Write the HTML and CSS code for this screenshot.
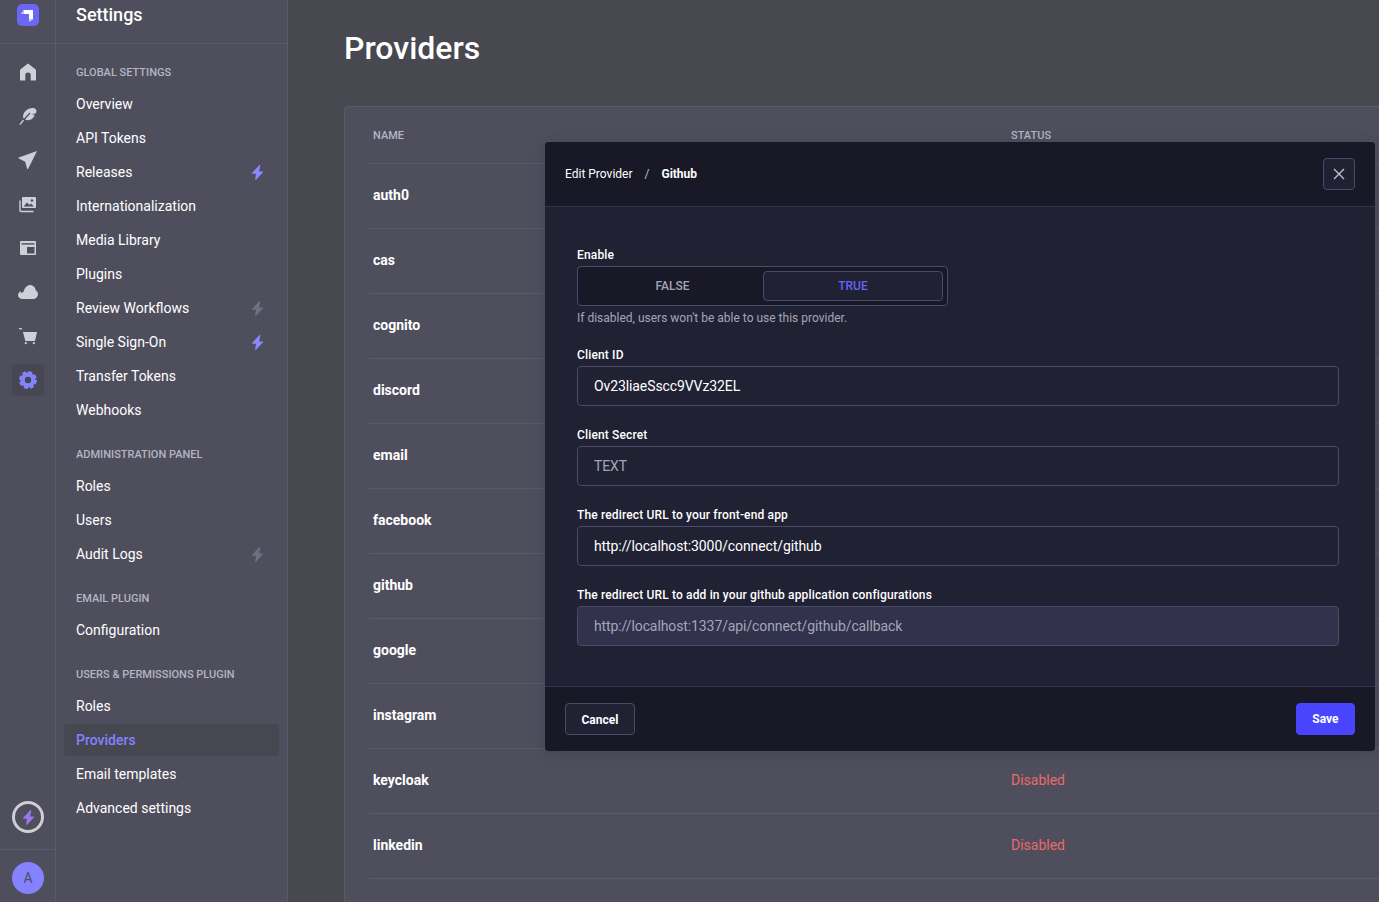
FILE: index.html
```html
<!DOCTYPE html>
<html lang="en">
<head>
    <meta charset="UTF-8">
    <title>Providers</title>
    <link rel="stylesheet" href="styles.css">
</head>
<body>
    <svg class="sprites" width="0" height="0">
        <symbol id="bolt" viewBox="1 0 10 16" preserveAspectRatio="none">
            <path d="M7.6.3 1 8.400c-.3.4-.1.9.4.9h3.200L3.900 15.300c-.1.5.5.8.8.4l6.300-7.900c.3-.4.1-.9-.4-.9H7.500L8.500.7C8.600.2 8-.1 7.600.3Z"/>
        </symbol>
    </svg>

    <div class="app">
        <nav class="rail">
            <div class="rail-logo">
                <svg width="22" height="22" viewBox="0 0 22 22">
                    <rect width="22" height="22" rx="5" fill="#6a67f5"/>
                    <path d="M6.500 6H16v9.500h-4V10H6.500Z" fill="#fff"/>
                    <path d="M6.500 6v4H4Z M12 15.500h4L12 18Z" fill="#c9c8fb"/>
                </svg>
            </div>
            <ul class="rail-list">
                <li class="rail-item">
                    <svg width="18" height="18" viewBox="0 0 18 18"><path d="M9 .6 1.600 6.200A1.500 1.500 0 0 0 1 7.400v9c0 .6.4 1 1 1h4.300V12.300a2.700 2.700 0 0 1 5.400 0v5.100H16c.6 0 1-.4 1-1v-9a1.500 1.500 0 0 0-.6-1.200Z"/></svg>
                </li>
                <li class="rail-item">
                    <svg width="18" height="18" viewBox="0 0 18 18"><path d="M4 10.500C3.800 5 8.700 1 13.500 1c3 0 4.500 1.700 3.800 4.200-.3 1.100-1.200 1.500-2.400 1.600l-2.200.2 2.900 1c-.8 2.800-3.300 5.200-6.600 5.200-1.100 0-2-.3-2.800-.8Z"/><path d="M.8 17.600 4.600 13" fill="none" stroke="#cfcfd8" stroke-width="1.300"/><path d="M4.600 13 11 6" fill="none" stroke="#4f4e5d" stroke-width="1.200"/></svg>
                </li>
                <li class="rail-item">
                    <svg width="20" height="20" viewBox="0 0 20 20"><path d="M19 1 .8 7.600c-.5.200-.5.800 0 1l6.400 3.200 1.900 6.900c.2.600.9.600 1.100.1Z"/></svg>
                </li>
                <li class="rail-item">
                    <svg width="18" height="18" viewBox="0 0 18 18"><path d="M4 2h12a1 1 0 0 1 1 1v9a1 1 0 0 1-1 1H4a1 1 0 0 1-1-1V3a1 1 0 0 1 1-1Z"/><path d="M1 5.500v10a1 1 0 0 0 1 1h12.500" fill="none" stroke="#cfcfd8" stroke-width="1.400"/><path d="m4.500 11.500 3.500-4 2.500 2.500 1.500-1.500 3 3Z" fill="#4f4e5d"/><circle cx="13" cy="5.500" r="1.300" fill="#4f4e5d"/></svg>
                </li>
                <li class="rail-item">
                    <svg width="16" height="14" viewBox="0 0 16 14"><rect width="16" height="14" rx="1"/><path d="M1.500 2.200h13V3.600h-13Z" fill="#4f4e5d"/><path d="M7 6h7.500v6.500H7Z" fill="#4f4e5d"/></svg>
                </li>
                <li class="rail-item">
                    <svg width="20" height="14" viewBox="0 0 20 14"><path d="M12 0c3 0 5.500 2.300 5.700 5.200 1.400.7 2.300 2.200 2.300 3.800 0 2.700-2.100 5-4.800 5H4c-2.300 0-4-1.700-4-3.900 0-1.800 1.200-3.500 3-3.900l-.5 1.500c1.200.3 1.900-.2 3-.9C6.400 3.900 8.400 0 12 0Z"/></svg>
                </li>
                <li class="rail-item">
                    <svg width="18" height="18" viewBox="0 0 18 18"><path d="M0 1h2.700L4 5h14l-2 9H6.300L3.300 2.200H0Z"/><circle cx="6.800" cy="16.200" r="1.100"/><circle cx="14.800" cy="16.200" r="1.100"/></svg>
                </li>
                <li class="rail-item rail-item-active">
                    <svg class="cog" width="18" height="18" viewBox="0 0 18 18"><circle cx="9" cy="9" r="5.400" stroke-width="4.400"/><circle cx="9" cy="9" r="7.800" stroke-width="2.400" stroke-dasharray="4.100 2.030"/></svg>
                </li>
            </ul>
            <div class="rail-upgrade">
                <span class="upgrade-ring">
                    <svg class="upgrade-bolt" width="11" height="15"><use href="#bolt"/></svg>
                </span>
            </div>
            <div class="rail-footer">
                <span class="avatar">A</span>
            </div>
        </nav>

        <aside class="sidebar">
            <div class="sidebar-title">Settings</div>
            <div class="sidebar-body">
                <h2 class="section-title">Global Settings</h2>
                <ul class="menu">
                    <li class="menu-item">Overview</li>
                    <li class="menu-item">API Tokens</li>
                    <li class="menu-item">Releases <svg class="bolt bolt-on" width="11" height="15"><use href="#bolt"/></svg></li>
                    <li class="menu-item">Internationalization</li>
                    <li class="menu-item">Media Library</li>
                    <li class="menu-item">Plugins</li>
                    <li class="menu-item">Review Workflows <svg class="bolt" width="11" height="15"><use href="#bolt"/></svg></li>
                    <li class="menu-item">Single Sign-On <svg class="bolt bolt-on" width="11" height="15"><use href="#bolt"/></svg></li>
                    <li class="menu-item">Transfer Tokens</li>
                    <li class="menu-item">Webhooks</li>
                </ul>
                <h2 class="section-title">Administration Panel</h2>
                <ul class="menu">
                    <li class="menu-item">Roles</li>
                    <li class="menu-item">Users</li>
                    <li class="menu-item">Audit Logs <svg class="bolt" width="11" height="15"><use href="#bolt"/></svg></li>
                </ul>
                <h2 class="section-title">Email Plugin</h2>
                <ul class="menu">
                    <li class="menu-item">Configuration</li>
                </ul>
                <h2 class="section-title">Users &amp; Permissions Plugin</h2>
                <ul class="menu">
                    <li class="menu-item">Roles</li>
                    <li class="menu-item menu-item-active">Providers</li>
                    <li class="menu-item">Email templates</li>
                    <li class="menu-item">Advanced settings</li>
                </ul>
            </div>
        </aside>

        <main class="content">
            <h1 class="page-title">Providers</h1>
            <div class="card">
                <div class="row row-head"><span>Name</span><span>Status</span></div>
                <div class="row"><span class="provider">auth0</span></div>
                <div class="row"><span class="provider">cas</span></div>
                <div class="row"><span class="provider">cognito</span></div>
                <div class="row"><span class="provider">discord</span></div>
                <div class="row"><span class="provider">email</span></div>
                <div class="row"><span class="provider">facebook</span></div>
                <div class="row"><span class="provider">github</span></div>
                <div class="row"><span class="provider">google</span></div>
                <div class="row"><span class="provider">instagram</span></div>
                <div class="row"><span class="provider">keycloak</span><span class="status-off">Disabled</span></div>
                <div class="row"><span class="provider">linkedin</span><span class="status-off">Disabled</span></div>
                <div class="row"></div>
            </div>
        </main>
    </div>

    <div class="modal">
        <header class="modal-head">
            <div class="crumbs">
                <span>Edit Provider</span>
                <span class="crumb-sep">/</span>
                <b>Github</b>
            </div>
            <button class="close-btn" type="button">
                <svg width="12" height="12" viewBox="0 0 12 12"><path d="M1 1l10 10M11 1 1 11" stroke="#c0c0cf" stroke-width="1.400" fill="none"/></svg>
            </button>
        </header>
        <form class="modal-body">
            <div class="field field-enable">
                <label class="field-label">Enable</label>
                <div class="toggle">
                    <span class="toggle-opt">False</span>
                    <span class="toggle-opt toggle-opt-on">True</span>
                </div>
                <p class="field-hint">If disabled, users won't be able to use this provider.</p>
            </div>
            <div class="field">
                <label class="field-label" for="clientId">Client ID</label>
                <input class="text-input" id="clientId" type="text" value="Ov23liaeSscc9VVz32EL">
            </div>
            <div class="field">
                <label class="field-label" for="clientSecret">Client Secret</label>
                <input class="text-input" id="clientSecret" type="text" placeholder="TEXT">
            </div>
            <div class="field">
                <label class="field-label" for="redirectFront">The redirect URL to your front-end app</label>
                <input class="text-input" id="redirectFront" type="text" value="http://localhost:3000/connect/github">
            </div>
            <div class="field">
                <label class="field-label" for="redirectApp">The redirect URL to add in your github application configurations</label>
                <input class="text-input" id="redirectApp" type="text" value="http://localhost:1337/api/connect/github/callback" disabled>
            </div>
        </form>
        <footer class="modal-foot">
            <button class="btn btn-cancel" type="button">Cancel</button>
            <button class="btn btn-save" type="button">Save</button>
        </footer>
    </div>
</body>
</html>
```

FILE: styles.css
```css
* {
    box-sizing: border-box;
}
html, body {
    height: 100%;
}
body {
    margin: 0;
    overflow: hidden;
    font-family: Roboto, "Noto Sans", Arial, sans-serif;
    font-size: 14px;
    color: #fff;
    background-color: #484850;
}
ul {
    list-style: none;
    margin: 0;
    padding: 0;
}
.sprites {
    position: absolute;
}
.app {
    display: flex;
    height: 902px;
}

/* icon rail */
.rail {
    width: 56px;
    flex-shrink: 0;
    display: flex;
    flex-direction: column;
    background-color: #4f4e5d;
    border-right: 1px solid #5b5a6a;
}
.rail-logo {
    height: 44px;
    padding: 4px 0 0 17px;
    border-bottom: 1px solid #5b5a6a;
}
.rail-list {
    flex: 1;
    display: flex;
    flex-direction: column;
    gap: 12px;
    padding: 12px 0 0 12px;
}
.rail-item {
    width: 32px;
    height: 32px;
    display: flex;
    align-items: center;
    justify-content: center;
    border-radius: 4px;
    fill: #cfcfd8;
}
.rail-item-active {
    background-color: #474751;
}
.cog {
    fill: none;
    stroke: #8482ff;
}
.rail-upgrade {
    padding: 0 0 16px 12px;
}
.upgrade-ring {
    width: 32px;
    height: 32px;
    display: flex;
    align-items: center;
    justify-content: center;
    border: 3px solid #cfcfd3;
    border-radius: 50%;
}
.upgrade-bolt {
    fill: #9a78ee;
}
.rail-footer {
    height: 53px;
    padding: 12px 0 0 12px;
    border-top: 1px solid #5b5a6a;
}
.avatar {
    width: 32px;
    height: 32px;
    display: flex;
    align-items: center;
    justify-content: center;
    border-radius: 50%;
    background-color: #8482ff;
    color: #4f4e5d;
    font-size: 14px;
}

/* settings menu */
.sidebar {
    width: 232px;
    flex-shrink: 0;
    background-color: #4f4e5d;
    border-right: 1px solid #5b5a6a;
}
.sidebar-title {
    height: 44px;
    padding: 2px 0 0 20px;
    border-bottom: 1px solid #5b5a6a;
    font-size: 18px;
    font-weight: 500;
    line-height: 26px;
}
.sidebar-body {
    padding: 20px 8px 0;
}
.section-title {
    height: 16px;
    margin: 0 0 8px;
    padding: 1px 0 0 12px;
    font-size: 11px;
    font-weight: 500;
    line-height: 16px;
    text-transform: uppercase;
    color: #b5b5c3;
}
.menu {
    display: flex;
    flex-direction: column;
    gap: 2px;
    margin-bottom: 20px;
}
.menu-item {
    height: 32px;
    display: flex;
    align-items: center;
    justify-content: space-between;
    padding: 0 16px 0 12px;
    border-radius: 4px;
}
.menu-item-active {
    background-color: #474751;
    color: #8482ff;
    font-weight: 500;
}
.bolt {
    fill: #6f6f81;
}
.bolt-on {
    fill: #8a88ff;
}

/* main column */
.content {
    flex: 1;
    min-width: 0;
    overflow: hidden;
    padding: 28px 0 0 56px;
}
.page-title {
    margin: 0 0 38px;
    font-size: 32px;
    font-weight: 500;
    line-height: 40px;
}
.card {
    margin-right: -20px;
    padding-left: 24px;
    background-color: #4f4e5d;
    border: 1px solid #5b5a6a;
    border-radius: 4px;
}
.row {
    height: 65px;
    display: grid;
    grid-template-columns: 638px 1fr;
    align-items: center;
    padding: 0 0 2px 4px;
    border-bottom: 1px solid #5b5a6a;
}
.row-head {
    height: 57px;
    padding-bottom: 0;
    font-size: 11px;
    font-weight: 500;
    text-transform: uppercase;
    color: #b5b5c3;
}
.provider {
    font-weight: 700;
}
.status-off {
    color: #e86a6a;
}

/* edit provider dialog */
.modal {
    position: absolute;
    left: 545px;
    top: 142px;
    width: 830px;
    height: 609px;
    display: flex;
    flex-direction: column;
    background-color: #212134;
    border-radius: 4px;
    overflow: hidden;
    box-shadow: 0 2px 15px rgba(33, 33, 52, 0.2);
}
.modal-head {
    height: 65px;
    display: flex;
    align-items: center;
    justify-content: space-between;
    padding: 0 20px;
    background-color: #181826;
    border-bottom: 1px solid #32324d;
}
.crumbs {
    display: flex;
    gap: 12px;
    font-size: 12px;
}
.crumbs b {
    font-weight: 700;
}
.crumb-sep {
    color: #c0c0cf;
}
.close-btn {
    width: 32px;
    height: 32px;
    display: flex;
    align-items: center;
    justify-content: center;
    padding: 0;
    background-color: #212134;
    border: 1px solid #4a4a6a;
    border-radius: 4px;
}
.modal-body {
    flex: 1;
    padding: 40px 36px 0 32px;
}
.field {
    margin-bottom: 21px;
}
.field-enable {
    margin-bottom: 21px;
}
.field-label {
    display: block;
    margin-bottom: 3px;
    padding-top: 1px;
    font-size: 12px;
    font-weight: 500;
    line-height: 15px;
    letter-spacing: 0.15px;
}
.toggle {
    width: 371px;
    height: 40px;
    display: grid;
    grid-template-columns: 1fr 180px;
    padding: 4px;
    background-color: #181826;
    border: 1px solid #4a4a6a;
    border-radius: 4px;
}
.toggle-opt {
    display: flex;
    align-items: center;
    justify-content: center;
    font-size: 12px;
    font-weight: 500;
    text-transform: uppercase;
    color: #a5a5ba;
    border: 1px solid transparent;
    border-radius: 4px;
}
.toggle-opt-on {
    background-color: #212134;
    border-color: #4a4a6a;
    color: #6563f5;
}
.field-hint {
    margin: 5px 0 0;
    font-size: 12px;
    line-height: 15px;
    color: #a5a5ba;
}
.text-input {
    display: block;
    width: 100%;
    height: 40px;
    padding: 0 16px;
    background-color: #212134;
    border: 1px solid #4a4a6a;
    border-radius: 4px;
    font: inherit;
    letter-spacing: -0.1px;
    color: #fff;
}
.text-input::placeholder {
    color: #a5a5ba;
    opacity: 1;
}
.text-input:disabled {
    background-color: #32324d;
    color: #a5a5ba;
}
.modal-foot {
    height: 65px;
    display: flex;
    align-items: center;
    justify-content: space-between;
    padding: 0 20px;
    background-color: #181826;
    border-top: 1px solid #32324d;
}
.btn {
    height: 32px;
    padding: 0 15.5px;
    border-radius: 4px;
    font: inherit;
    font-size: 12px;
    font-weight: 700;
    color: #fff;
}
.btn-cancel {
    padding-top: 1px;
    background-color: #212134;
    border: 1px solid #4a4a6a;
}
.btn-save {
    background-color: #4945ff;
    border: 1px solid #4945ff;
}
```
